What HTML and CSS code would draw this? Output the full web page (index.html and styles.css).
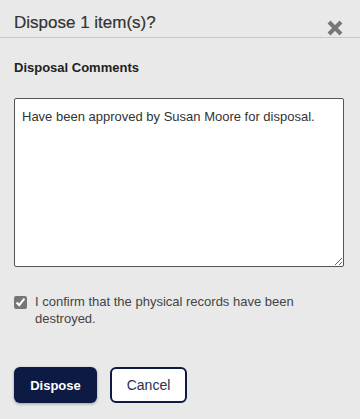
FILE: index.html
```html
<!DOCTYPE html>
<html>
<head>
<meta charset="utf-8">
<link rel="stylesheet" href="styles.css">
</head>
<body>
<div class="dialog">
  <div class="header">
    <h1 class="title">Dispose 1 item(s)?</h1>
    <button class="close" aria-label="Close">
      <svg width="16" height="16" viewBox="0 0 16 16"><path d="M2 2 L14 14 M14 2 L2 14" stroke="#777" stroke-width="4" stroke-linecap="butt"/></svg>
    </button>
  </div>
  <div class="body">
    <label class="field-label" for="comments">Disposal Comments</label>
    <textarea id="comments" class="comments">Have been approved by Susan Moore for disposal.</textarea>
    <label class="confirm">
      <input type="checkbox" class="check" checked>
      <span class="confirm-text">I confirm that the physical records have been destroyed.</span>
    </label>
    <div class="actions">
      <button class="btn btn-primary">Dispose</button>
      <button class="btn btn-secondary">Cancel</button>
    </div>
  </div>
</div>
</body>
</html>
```
FILE: styles.css
```css
html, body {
  margin: 0;
  padding: 0;
  background: #e9e9e9;
}
body {
  font-family: "Liberation Sans", Arial, sans-serif;
  color: #222;
}
.dialog {
  width: 360px;
  height: 419px;
  box-sizing: border-box;
}
.header {
  display: flex;
  align-items: flex-end;
  justify-content: space-between;
  height: 38px;
  box-sizing: border-box;
  border-bottom: 1px solid #c8c8c8;
  padding: 0 17px 0 14px;
}
.title {
  margin: 0 0 4px 0;
  font-size: 17px;
  font-weight: normal;
  color: #333;
  line-height: 20px;
  -webkit-text-stroke: 0.2px #333;
}
.close {
  border: 0;
  background: none;
  padding: 0;
  margin: 0 0 1px 0;
  width: 16px;
  height: 16px;
  display: flex;
}
.body {
  padding: 0 16px 0 14px;
  display: flex;
  flex-direction: column;
}
.field-label {
  margin-top: 22px;
  font-size: 13px;
  font-weight: bold;
  color: #222;
  line-height: 16px;
}
.comments {
  margin-top: 22px;
  width: 330px;
  height: 169px;
  box-sizing: border-box;
  border: 1px solid #555;
  border-radius: 2px;
  padding: 10px 7px 7px;
  font-family: "Liberation Sans", Arial, sans-serif;
  font-size: 13px;
  line-height: 16px;
  color: #333;
  background: #fff;
  resize: vertical;
}
.confirm {
  margin-top: 26px;
  display: flex;
  align-items: flex-start;
  gap: 8px;
}
.check {
  margin: 3px 0 0 0;
  width: 13px;
  height: 13px;
  accent-color: #767676;
  flex: none;
}
.confirm-text {
  font-size: 13px;
  line-height: 17px;
  color: #444;
}
.actions {
  margin-top: 40px;
  display: flex;
  gap: 13px;
}
.btn {
  height: 36px;
  border-radius: 6px;
  font-family: "Liberation Sans", Arial, sans-serif;
  font-size: 14px;
  padding: 0;
  box-sizing: border-box;
}
.btn-primary {
  background: #0d1b44;
  color: #fff;
  font-weight: bold;
  font-size: 13px;
  border: 0;
  width: 83px;
  box-shadow: 0 1px 3px rgba(0,0,0,0.35);
}
.btn-secondary {
  background: #fff;
  color: #2a3050;
  border: 2px solid #0d1b44;
  width: 77px;
}
```
